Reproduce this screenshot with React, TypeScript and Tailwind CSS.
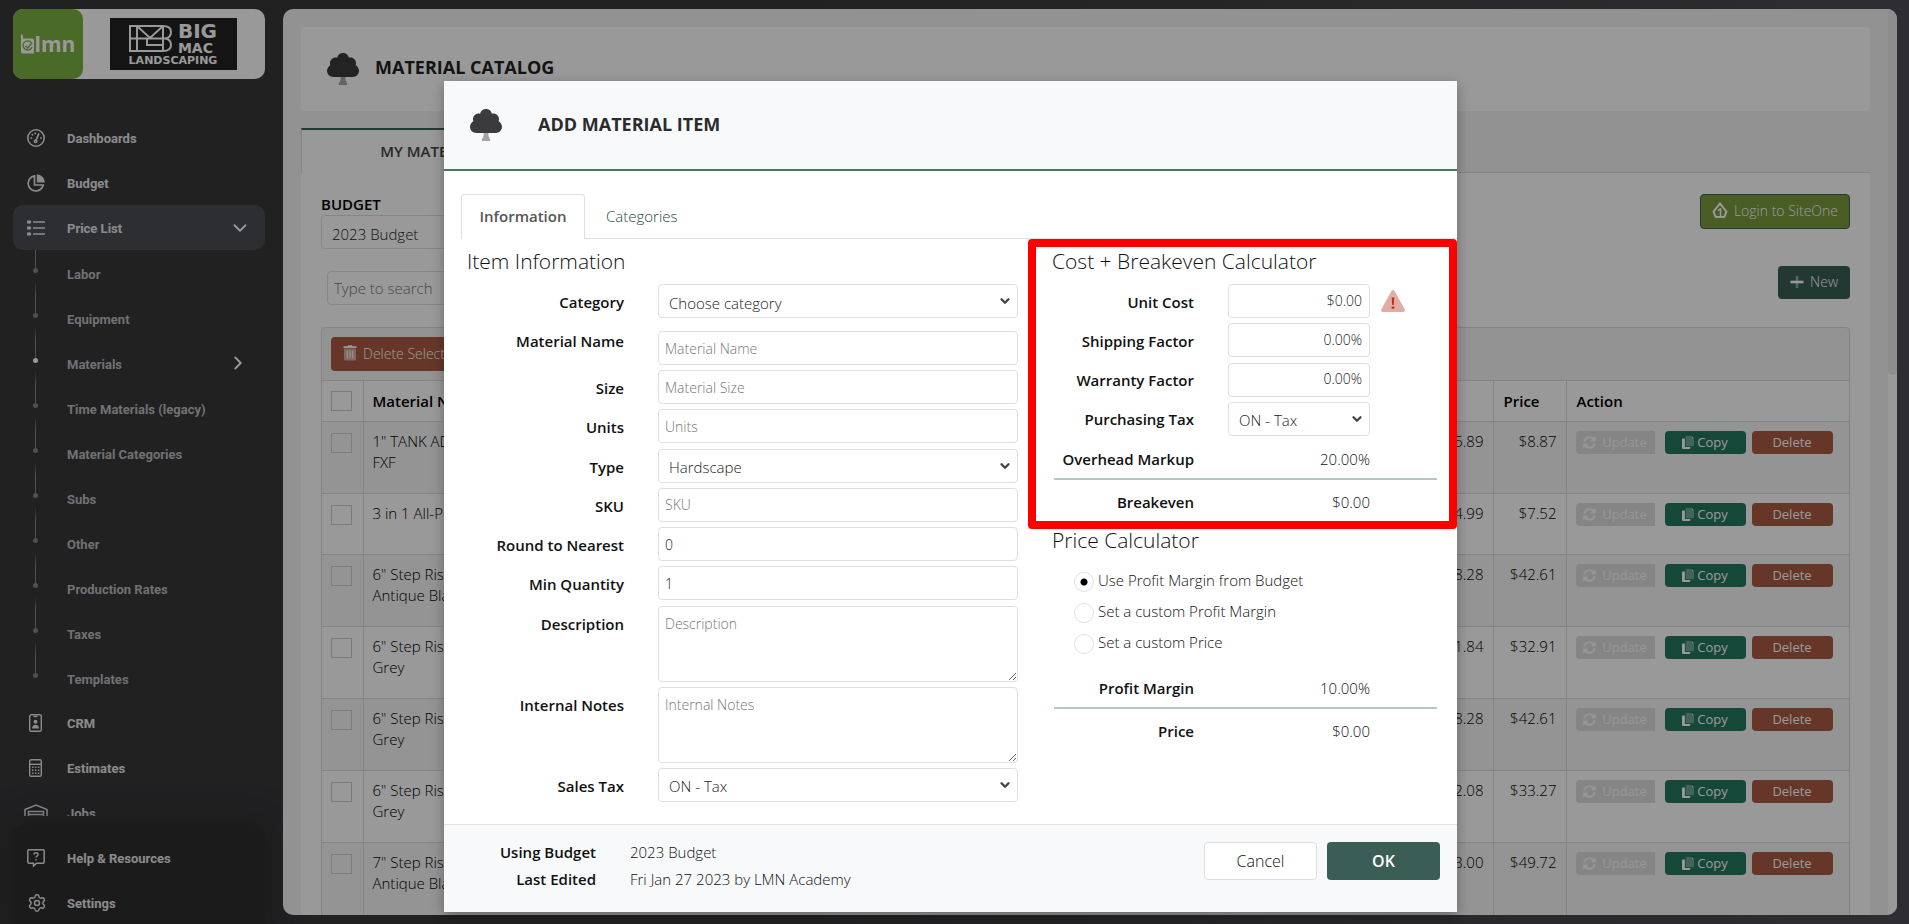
import React, { useState } from "react";
import { ChevronDown, ChevronRight, Settings } from "lucide-react";
import { FaSyncAlt } from "react-icons/fa";

type IconProps = { className?: string };

const subItems = [
  "Labor",
  "Equipment",
  "Materials",
  "Time Materials (legacy)",
  "Material Categories",
  "Subs",
  "Other",
  "Production Rates",
  "Taxes",
  "Templates",
];

const rows = [
  { name: ['1" TANK ADAPTER', "FXF"], cost: "$5.89", price: "$8.87" },
  { name: ["3 in 1 All-Purpose Soil"], cost: "$4.99", price: "$7.52" },
  { name: ['6" Step Riser', "Antique Black"], cost: "$28.28", price: "$42.61" },
  { name: ['6" Step Riser', "Grey"], cost: "$21.84", price: "$32.91" },
  { name: ['6" Step Riser', "Grey"], cost: "$28.28", price: "$42.61" },
  { name: ['6" Step Riser', "Grey"], cost: "$22.08", price: "$33.27" },
  { name: ['7" Step Riser', "Antique Black"], cost: "$33.00", price: "$49.72" },
];

const TreeIcon = ({ className }: IconProps) => (
  <svg viewBox="0 0 32 32" className={className} aria-hidden="true">
    <path d="M13.6 23h4.8v4l1.8 3.4c.3.8-.1 1.6-.9 1.6h-6.6c-.8 0-1.2-.8-.9-1.6l1.8-3.4z" fill="#3b3b3d" opacity=".45" />
    <path
      d="M16 0c3 0 5.300 2 5.900 4.800c.5-.1.9-.2 1.400-.2c3.300 0 5.700 2.500 5.700 5.700c0 .7-.1 1.300-.3 1.900c2 1.200 3.300 3.300 3.300 5.600c0 3.600-2.900 6.200-6.400 6.200H6.400C2.900 24 0 21.400 0 17.800c0-2.300 1.300-4.400 3.300-5.600c-.2-.6-.3-1.200-.3-1.900c0-3.200 2.400-5.700 5.700-5.700c.5 0 .9.1 1.400.2C10.700 2 13 0 16 0z"
      fill="#3b3b3d"
    />
  </svg>
);

const GaugeIcon = ({ className }: IconProps) => (
  <svg viewBox="0 0 18 18" className={className} fill="none" stroke="currentColor" aria-hidden="true">
    <circle cx="9" cy="9" r="8.200" strokeWidth="1.600" />
    <path d="M9 11.500 11.600 5" strokeWidth="1.800" strokeLinecap="round" />
    <circle cx="8.600" cy="12.200" r="1.300" strokeWidth="1.500" />
    <path d="M3.400 9h1.800M4.800 5.200l1.200 1.200M8.200 3.400v1.800M13 9h1.800" strokeWidth="1.700" />
  </svg>
);

const PieIcon = ({ className }: IconProps) => (
  <svg viewBox="0 0 18 18" className={className} fill="none" stroke="currentColor" aria-hidden="true">
    <path d="M7.500 1.900A7.600 7.600 0 1 0 16.200 11H7.500z" strokeWidth="1.700" />
    <path d="M9.800.2a8.200 8.200 0 0 1 8 8.300h-8z" fill="currentColor" stroke="none" />
  </svg>
);

const ListIcon = ({ className }: IconProps) => (
  <svg viewBox="0 0 18 18" className={className} fill="currentColor" aria-hidden="true">
    <path d="M0 1.500h4v3H0zM0 7.500h4v3H0zM0 13.500h4v3H0zM6 2.300h12v1.500H6zM6 8.300h12v1.500H6zM6 14.300h12v1.500H6z" />
  </svg>
);

const BadgeIcon = ({ className }: IconProps) => (
  <svg viewBox="0 0 18 18" className={className} fill="none" stroke="currentColor" aria-hidden="true">
    <rect x="2.700" y=".7" width="11.600" height="16.600" rx="1.600" strokeWidth="1.400" />
    <path d="M6.500 2.500h4" strokeWidth="1.400" />
    <circle cx="8.500" cy="7.800" r="2" fill="currentColor" stroke="none" />
    <path d="M5 14.500c0-2.500 1.500-3.800 3.500-3.800s3.500 1.300 3.500 3.800z" fill="currentColor" stroke="none" />
  </svg>
);

const CalculatorIcon = ({ className }: IconProps) => (
  <svg viewBox="0 0 18 18" className={className} fill="none" stroke="currentColor" aria-hidden="true">
    <rect x="2.700" y=".7" width="11.600" height="16.600" rx="1.600" strokeWidth="1.400" />
    <path d="M3 5.300h11" strokeWidth="1.400" />
    <path d="M5 8.300h7.500M5 11.200h7.500M5 14.200h7.500" strokeWidth="1.500" strokeDasharray="1.500 1.400" />
  </svg>
);

const WarehouseIcon = ({ className }: IconProps) => (
  <svg viewBox="0 0 24 18" className={className} fill="none" stroke="currentColor" aria-hidden="true">
    <path d="M1 18V5.500L12 1l11 4.500V18" strokeWidth="1.600" />
    <path d="M4.500 18V7.500h15V18M4.500 10.500h15M4.500 13.500h15" strokeWidth="1.500" />
  </svg>
);

const HelpIcon = ({ className }: IconProps) => (
  <svg viewBox="0 0 18 18" className={className} fill="none" stroke="currentColor" aria-hidden="true">
    <path d="M1.800.8h14.400a1 1 0 0 1 1 1v11.400a1 1 0 0 1-1 1H9.500L6.500 17v-2.800H1.800a1 1 0 0 1-1-1V1.800a1 1 0 0 1 1-1z" strokeWidth="1.500" />
    <path d="M6.900 5.600c.1-2.500 4.200-2.400 4.200 0 0 1.500-2.100 1.500-2.100 3M9 10v1.400" strokeWidth="1.400" />
  </svg>
);

const TrashIcon = ({ className }: IconProps) => (
  <svg viewBox="0 0 14 16" className={className} fill="currentColor" aria-hidden="true">
    <path d="M1 3.500h12V14a1.500 1.500 0 0 1-1.500 1.500h-9A1.500 1.500 0 0 1 1 14z" opacity=".5" />
    <path d="M.5 1.200h4l.6-1h3.800l.6 1h4V3H.5zM3.700 5.500h1v8h-1zM6.500 5.500h1v8h-1zM9.300 5.500h1v8h-1z" />
  </svg>
);

const CopyIcon = ({ className }: IconProps) => (
  <svg viewBox="0 0 12 13" className={className} fill="currentColor" aria-hidden="true">
    <path d="M4.500 0H9v3h3v6.500a.8.800 0 0 1-.8.800H4.500a.8.800 0 0 1-.8-.8V.8a.8.800 0 0 1 .8-.8z" opacity=".35" />
    <path d="M9.600 0 12 2.400H9.600zM.8 2.600h2.100v8.500H8.300v1a.8.800 0 0 1-.8.800H.8a.8.800 0 0 1-.8-.8V3.400a.8.800 0 0 1 .8-.8z" />
  </svg>
);

const SiteOneIcon = ({ className }: IconProps) => (
  <svg viewBox="0 0 16 17" className={className} fill="none" stroke="currentColor" aria-hidden="true">
    <path d="M8 1.500c2 3 4.500 5 6.500 8.200L12.300 15H3.700L1.500 9.700C3.500 6.500 6 4.500 8 1.500z" strokeWidth="2" />
    <path d="M6 8.500 8.500 7v7" strokeWidth="1.500" />
  </svg>
);

const WarningIcon = ({ className }: IconProps) => (
  <svg viewBox="0 0 24 22" className={className} aria-hidden="true">
    <path d="M10.500.9a1.700 1.700 0 0 1 3 0l10.200 18.300c.7 1.300-.1 2.700-1.500 2.700H1.800C.4 21.900-.4 20.500.3 19.200z" fill="#e2aca5" />
    <path d="M10.700 7.500h2.600l-.5 7.500h-1.600zM10.700 16.400h2.600v2.400h-2.600z" fill="#b93222" />
  </svg>
);

const NavItem = ({ label, icon }: { label: string; icon: React.ReactNode }) => (
  <a href="#" className="flex h-[45px] shrink-0 items-center pl-3.5 text-[#e8e8ea]">
    <span className="flex w-10 shrink-0 items-center">{icon}</span>
    <span className="pt-0.5">{label}</span>
  </a>
);

const Sidebar = () => (
  <aside className="flex h-screen w-[283px] shrink-0 flex-col pr-[18px] pl-[13px] pt-[9px] font-['Roboto',sans-serif] text-[13px] leading-5 font-bold">
    <div className="flex h-[70px] shrink-0 items-center rounded-[10px] bg-white">
      <div className="flex size-[70px] items-center justify-center gap-px rounded-[10px] bg-[#7cb142] text-white">
        <svg viewBox="0 0 13 20" className="h-5 w-[13px] shrink-0" fill="none" stroke="currentColor" aria-hidden="true">
          <path d="M0 0l2 1.500V4.500h9a2 2 0 0 1 2 2v13H2a2 2 0 0 1-2-2z" fill="currentColor" stroke="none" />
          <path d="M10.300 8.600A4.600 4.600 0 1 0 11 13M4.500 12l2 2 4.500-5" stroke="#7cb142" strokeWidth="1.400" />
        </svg>
        <span className="font-['Open_Sans',sans-serif] text-[21px] leading-6 font-bold">lmn</span>
      </div>
      <div className="flex flex-1 justify-center pr-0.5">
        <div className="flex h-[52px] w-[127px] flex-col items-center justify-center bg-[#222] font-['DejaVu_Sans',sans-serif] text-white">
          <div className="flex items-center gap-1.5">
            <svg viewBox="0 0 43 27" className="h-[27px] w-[43px]" fill="none" stroke="currentColor" strokeWidth="2" aria-hidden="true">
              <path d="M1 1h33c5 0 8 2 8 6s-2 6-6 6.500c4 .5 6 2.500 6 6.500s-3 6-8 6H1zM8 1v25M1 13.500h35M8 1l13 12L34 1v25M18 13.500V20h16" />
            </svg>
            <span className="flex flex-col">
              <span className="text-[20px] leading-[19px] font-bold">BIG</span>
              <span className="text-[14px] leading-[14px] font-bold">MAC</span>
            </span>
          </div>
          <span className="text-[11px] leading-[12px] font-bold">LANDSCAPING</span>
        </div>
      </div>
    </div>

    <nav className="mt-9 flex min-h-0 flex-1 flex-col overflow-hidden">
      <NavItem label="Dashboards" icon={<GaugeIcon className="size-[18px]" />} />
      <NavItem label="Budget" icon={<PieIcon className="size-[18px]" />} />
      <a href="#" className="flex h-[45px] shrink-0 items-center rounded-[10px] bg-[#4b4d54] pl-3.5 text-[#e8e8ea]">
        <span className="w-10 shrink-0">
          <ListIcon className="size-[18px]" />
        </span>
        <span className="pt-0.5">Price List</span>
        <ChevronDown className="mr-3.5 ml-auto size-[22px] text-white" />
      </a>
      {subItems.map((item) => (
        <a key={item} href="#" className="flex h-[45px] shrink-0 items-center text-[#bdbdc0]">
          <span className="flex h-full w-[54px] shrink-0 flex-col items-start pl-5">
            <span className="ml-0.5 h-[18px] w-px bg-[#85858a]" />
            <span className={item === "Materials" ? "size-[5px] rounded-full bg-white" : "size-[5px] rounded-full bg-[#85858a]"} />
            {item !== "Templates" && <span className="mt-2 ml-0.5 w-px flex-1 bg-linear-to-b from-transparent to-[#85858a]" />}
          </span>
          <span className="pt-1">{item}</span>
          {item === "Materials" && <ChevronRight className="mr-4 ml-auto size-[22px] text-white" />}
        </a>
      ))}
      <NavItem label="CRM" icon={<BadgeIcon className="size-[18px]" />} />
      <NavItem label="Estimates" icon={<CalculatorIcon className="size-[18px]" />} />
      <NavItem label="Jobs" icon={<WarehouseIcon className="-ml-[3px] h-[18px] w-6 shrink-0" />} />
    </nav>

    <div className="mt-[9px] flex h-[99px] shrink-0 flex-col overflow-hidden rounded-t-[10px] bg-[#2d2d2d] pt-2.5 shadow-[0_0_30px_8px_rgba(30,30,30,0.35)]">
      <NavItem label="Help & Resources" icon={<HelpIcon className="size-[18px]" />} />
      <NavItem label="Settings" icon={<Settings className="size-5" strokeWidth={1.8} />} />
    </div>
  </aside>
);

const checkboxClass = "block h-5 w-[21px] appearance-none border border-[#cfcfcf]";

const MaterialTable = () => (
  <div className="mt-[22px] rounded-t border border-[#dcdcdc] bg-[#f5f5f5]">
    <div className="flex h-[52px] items-center px-[9px]">
      <button className="flex h-[34px] items-center gap-1.5 rounded bg-[#aa5d45] px-3 pb-0.5 text-[14px] text-white">
        <TrashIcon className="h-4 w-[14px]" />
        Delete Selected
      </button>
    </div>
    <table className="w-full table-fixed border-collapse bg-white text-[15px] leading-[21px] text-black">
      <thead>
        <tr className="h-[41px] border-t border-[#dcdcdc] text-left font-semibold">
          <th className="w-[41px] border-r border-[#dcdcdc] pl-[9px]">
            <input type="checkbox" aria-label="Select all" className={checkboxClass} />
          </th>
          <th className="pl-[9px] font-semibold">Material Name</th>
          <th className="w-[160px] pl-[9px] font-semibold">Cost</th>
          <th className="w-[73px] border-l border-[#dcdcdc] pl-2.5 font-semibold">Price</th>
          <th className="w-[283px] border-l border-[#dcdcdc] pl-2.5 font-semibold">Action</th>
        </tr>
      </thead>
      <tbody>
        {rows.map((row, i) => (
          <tr
            key={i}
            className={
              row.name.length > 1
                ? "h-[72px] border-t border-[#dcdcdc] align-top odd:bg-[#f7f7f7]"
                : "h-[61px] border-t border-[#dcdcdc] align-top odd:bg-[#f7f7f7]"
            }
          >
            <td className="border-r border-[#dcdcdc] pt-[11px] pl-[9px]">
              <input type="checkbox" aria-label={row.name[0]} className={checkboxClass} />
            </td>
            <td className="pt-[9px] pl-[9px]">
              {row.name.map((line) => (
                <div key={line}>{line}</div>
              ))}
            </td>
            <td className="pt-[9px] pr-[9px] text-right">{row.cost}</td>
            <td className="border-l border-[#dcdcdc] pt-[9px] pr-[9px] text-right">{row.price}</td>
            <td className="border-l border-[#dcdcdc] pt-[9px] pl-[9px]">
              <div className="flex text-[13px] font-normal text-white">
                <button disabled className="flex h-[23px] w-[79px] items-center justify-center gap-1.5 rounded-l bg-[#dedede] text-[#fafafa]">
                  <FaSyncAlt className="size-[13px]" />
                  Update
                </button>
                <button className="ml-2.5 flex h-[23px] w-[81px] items-center justify-center gap-[3px] rounded bg-[#257861]">
                  <CopyIcon className="h-[13px] w-3" />
                  Copy
                </button>
                <button className="ml-1.5 h-[23px] w-[81px] rounded bg-[#aa5d45]">Delete</button>
              </div>
            </td>
          </tr>
        ))}
      </tbody>
    </table>
  </div>
);

const Catalog = () => (
  <main className="mt-[9px] mr-3 mb-[9px] flex min-w-0 flex-1 overflow-hidden rounded-[10px] bg-[#f3f3f3]">
    <div className="min-w-0 flex-1 px-[18px] pt-[18px]">
      <header className="flex h-[84px] items-center rounded bg-white pl-[26px]">
        <TreeIcon className="size-8" />
        <h1 className="ml-4 pb-1 text-[18px] leading-6 font-bold text-[#222]">MATERIAL CATALOG</h1>
      </header>
      <div className="mt-[17px] flex">
        <button className="h-[45px] w-[265px] border-t-2 border-l border-t-[#3b5f55] border-l-[#dcdcdc] bg-white text-[15px] font-semibold text-[#444]">
          MY MATERIALS
        </button>
        <div className="flex-1 border-b border-[#dcdcdc]" />
      </div>
      <div className="h-[760px] bg-white px-5">
        <div className="flex items-start justify-between pt-[21px]">
          <div className="flex w-[300px] flex-col">
            <label htmlFor="budget" className="text-[15px] leading-[21px] font-semibold text-black">
              BUDGET
            </label>
            <Select id="budget" value="2023 Budget" />
          </div>
          <button className="flex h-[35px] items-center gap-1.5 rounded border border-[#3b5f55] bg-[#7a9b3e] px-[11px] pb-0.5 text-[14px] text-white">
            <SiteOneIcon className="h-[17px] w-4" />
            Login to SiteOne
          </button>
        </div>
        <div className="mt-[17px] flex items-start justify-between">
          <input
            aria-label="Search"
            placeholder="Type to search"
            className="mt-[5px] ml-1.5 h-[34px] w-[240px] rounded border border-[#dfdfdf] px-1.5 text-[15px] placeholder:text-[#777]"
          />
          <button className="flex h-[33px] items-center gap-1.5 rounded bg-[#3a5e55] px-3 pb-0.5 text-[14px] text-white">
            <svg viewBox="0 0 14 14" className="size-[14px]" aria-hidden="true">
              <path d="M5.700 1h2.600v12H5.700z" fill="#fff" opacity=".45" />
              <path d="M.5 5.700h13v2.600H.5z" fill="#fff" />
            </svg>
            New
          </button>
        </div>
        <MaterialTable />
      </div>
    </div>
    <div className="w-[9px] bg-white">
      <div className="h-[366px] rounded-b-full bg-[#ececec]" />
    </div>
  </main>
);

const controlClass = "w-full rounded border border-[#dfdfdf] bg-white text-[#222] placeholder:text-[#777]";

const Select = ({ id, value }: { id: string; value: string }) => (
  <div className="relative w-full">
    <select id={id} className={`${controlClass} block h-[34px] appearance-none pt-1 pl-2.5 text-[15px]`}>
      <option>{value}</option>
    </select>
    <ChevronDown className="pointer-events-none absolute top-2.5 right-1.5 size-[14px] text-[#444]" strokeWidth={4} />
  </div>
);

type FieldProps = { id: string; label: string; children: React.ReactNode };

const Field = ({ id, label, children }: FieldProps) => (
  <div className="flex items-start">
    <label htmlFor={id} className="w-[180px] shrink-0 pt-2 text-right font-semibold">
      {label}
    </label>
    <div className="ml-[34px] flex flex-1">{children}</div>
  </div>
);

const TextField = ({ id, label, value }: { id: string; label: string; value?: string }) => (
  <Field id={id} label={label}>
    <input id={id} defaultValue={value} placeholder={label === "Size" ? "Material Size" : label} className={`${controlClass} h-[34px] px-1.5 text-[14px]`} />
  </Field>
);

const SelectField = ({ id, label, value }: { id: string; label: string; value: string }) => (
  <Field id={id} label={label}>
    <Select id={id} value={value} />
  </Field>
);

const AreaField = ({ id, label }: { id: string; label: string }) => (
  <Field id={id} label={label}>
    <textarea id={id} placeholder={label} className={`${controlClass} h-[76px] px-1.5 py-1.5 text-[14px]`} />
  </Field>
);

const AmountField = ({ id, label, value, warn }: { id: string; label: string; value: string; warn?: boolean }) => (
  <div className="flex h-[34px] items-center">
    <label htmlFor={id} className="w-[142px] pt-0.5 text-right font-semibold">
      {label}
    </label>
    <input id={id} defaultValue={value} className="ml-[34px] h-[34px] w-[142px] rounded border border-[#dfdfdf] px-[7px] pb-0.5 text-right text-[14px] text-[#222]" />
    {warn && <WarningIcon className="ml-[11px] h-[22px] w-6" />}
  </div>
);

const Total = ({ label, value }: { label: string; value: string }) => (
  <div className="flex h-[34px] items-center pt-0.5">
    <span className="w-[142px] text-right font-semibold">{label}</span>
    <span className="ml-[34px] w-[142px] text-right">{value}</span>
  </div>
);

const pricing = ["Use Profit Margin from Budget", "Set a custom Profit Margin", "Set a custom Price"];

const MaterialDialog = () => {
  const [mode, setMode] = useState(0);

  return (
    <div role="dialog" aria-label="Add material item" className="w-[1013px] bg-white text-[15px] leading-[21px] text-[#111] shadow-[0_4px_12px_rgba(0,0,0,0.3)]">
      <header className="flex h-[90px] items-center border-b-2 border-[#417a5b] bg-[#f8f9fb] pl-[26px]">
        <TreeIcon className="size-8" />
        <h2 className="ml-9 pb-0.5 text-[18px] font-bold text-[#2b2b2d]">ADD MATERIAL ITEM</h2>
      </header>

      <div className="flex pt-[23px]">
        <div className="w-[17px]" />
        <button className="h-[45px] w-[124px] rounded-t border border-b-0 border-[#dfdfdf] pb-0.5 font-semibold text-[#555]">Information</button>
        <button className="h-[45px] border-b border-[#dfdfdf] px-[21px] text-[#1d4a3e]">Categories</button>
        <div className="flex-1 border-b border-[#dfdfdf]" />
      </div>

      <div className="flex">
        <div className="min-w-0 flex-1 pr-2.5 pb-[22px]">
          <h3 className="flex h-[45px] items-center pl-[23px] text-[21px]">Item Information</h3>
          <SelectField id="category" label="Category" value="Choose category" />
          <div className="mt-1.5 flex h-[478px] flex-col justify-between">
            <div className="flex items-start">
              <label htmlFor="name" className="w-[180px] shrink-0 pt-[7px] text-right font-semibold">
                Material Name
              </label>
              <input id="name" placeholder="Material Name" className={`${controlClass} mt-[7px] ml-[34px] h-[34px] px-1.5 text-[14px]`} />
            </div>
            <TextField id="size" label="Size" />
            <TextField id="units" label="Units" />
            <SelectField id="type" label="Type" value="Hardscape" />
            <TextField id="sku" label="SKU" />
            <TextField id="round" label="Round to Nearest" value="0" />
            <TextField id="min" label="Min Quantity" value="1" />
            <AreaField id="description" label="Description" />
            <AreaField id="notes" label="Internal Notes" />
            <SelectField id="sales-tax" label="Sales Tax" value="ON - Tax" />
          </div>
        </div>

        <div className="w-[429px] shrink-0">
          <section className="h-[290px] rounded border-8 border-[#ff0000] pl-4">
            <h3 className="flex h-[37px] items-center pb-2 text-[21px]">Cost + Breakeven Calculator</h3>
            <div className="flex h-[191px] flex-col justify-between">
              <AmountField id="unit-cost" label="Unit Cost" value="$0.00" warn />
              <AmountField id="shipping" label="Shipping Factor" value="0.00%" />
              <AmountField id="warranty" label="Warranty Factor" value="0.00%" />
              <div className="flex h-[34px] items-center">
                <label htmlFor="purchasing-tax" className="w-[142px] pt-0.5 text-right font-semibold">
                  Purchasing Tax
                </label>
                <div className="ml-[34px] w-[142px]">
                  <Select id="purchasing-tax" value="ON - Tax" />
                </div>
              </div>
              <Total label="Overhead Markup" value="20.00%" />
            </div>
            <div className="mt-[3px] mr-3 ml-0.5 h-0.5 bg-[#b3c7c3]" />
            <div className="mt-1">
              <Total label="Breakeven" value="$0.00" />
            </div>
          </section>

          <section className="pl-6">
            <h3 className="flex h-[22px] items-center text-[21px]">Price Calculator</h3>
            <div className="mt-[15px] flex flex-col pl-[22px]">
              {pricing.map((label, i) => (
                <label key={label} className="flex h-[31px] items-center gap-1">
                  <input
                    type="radio"
                    name="pricing"
                    checked={mode === i}
                    onChange={() => setMode(i)}
                    className="size-5 appearance-none rounded-full border border-[#dfdfdf] bg-white checked:bg-[radial-gradient(circle,#000_3px,#fff_4px)]"
                  />
                  <span className="pb-0.5">{label}</span>
                </label>
              ))}
            </div>
            <div className="mt-[11px]">
              <Total label="Profit Margin" value="10.00%" />
            </div>
            <div className="mt-[3px] mr-5 ml-0.5 h-0.5 bg-[#b3c7c3]" />
            <div className="mt-1">
              <Total label="Price" value="$0.00" />
            </div>
          </section>
        </div>
      </div>

      <footer className="flex h-[88px] items-start justify-between border-t border-[#e0e2e4] bg-[#f8f9fb] pr-[17px]">
        <dl className="grid grid-cols-[152px_auto] gap-x-[34px] gap-y-1.5 pt-[17px]">
          <dt className="text-right font-semibold">Using Budget</dt>
          <dd>2023 Budget</dd>
          <dt className="text-right font-semibold">Last Edited</dt>
          <dd>Fri Jan 27 2023 by LMN Academy</dd>
        </dl>
        <div className="flex gap-2.5 pt-[17px] text-[16px]">
          <button className="h-[38px] w-[113px] rounded border border-[#dfdfdf] bg-white">Cancel</button>
          <button className="h-[38px] w-[113px] rounded bg-[#3a5e55] font-semibold text-white">OK</button>
        </div>
      </footer>
    </div>
  );
};

function App() {
  return (
    <div className="relative flex h-screen overflow-hidden bg-linear-to-r from-[#37373a] from-40% to-[#4d4c53] font-['Open_Sans',sans-serif] font-light">
      <Sidebar />
      <Catalog />
      <div className="absolute inset-0 flex items-start justify-center bg-black/40 pt-[81px] pr-2">
        <MaterialDialog />
      </div>
    </div>
  );
}

export default App;
